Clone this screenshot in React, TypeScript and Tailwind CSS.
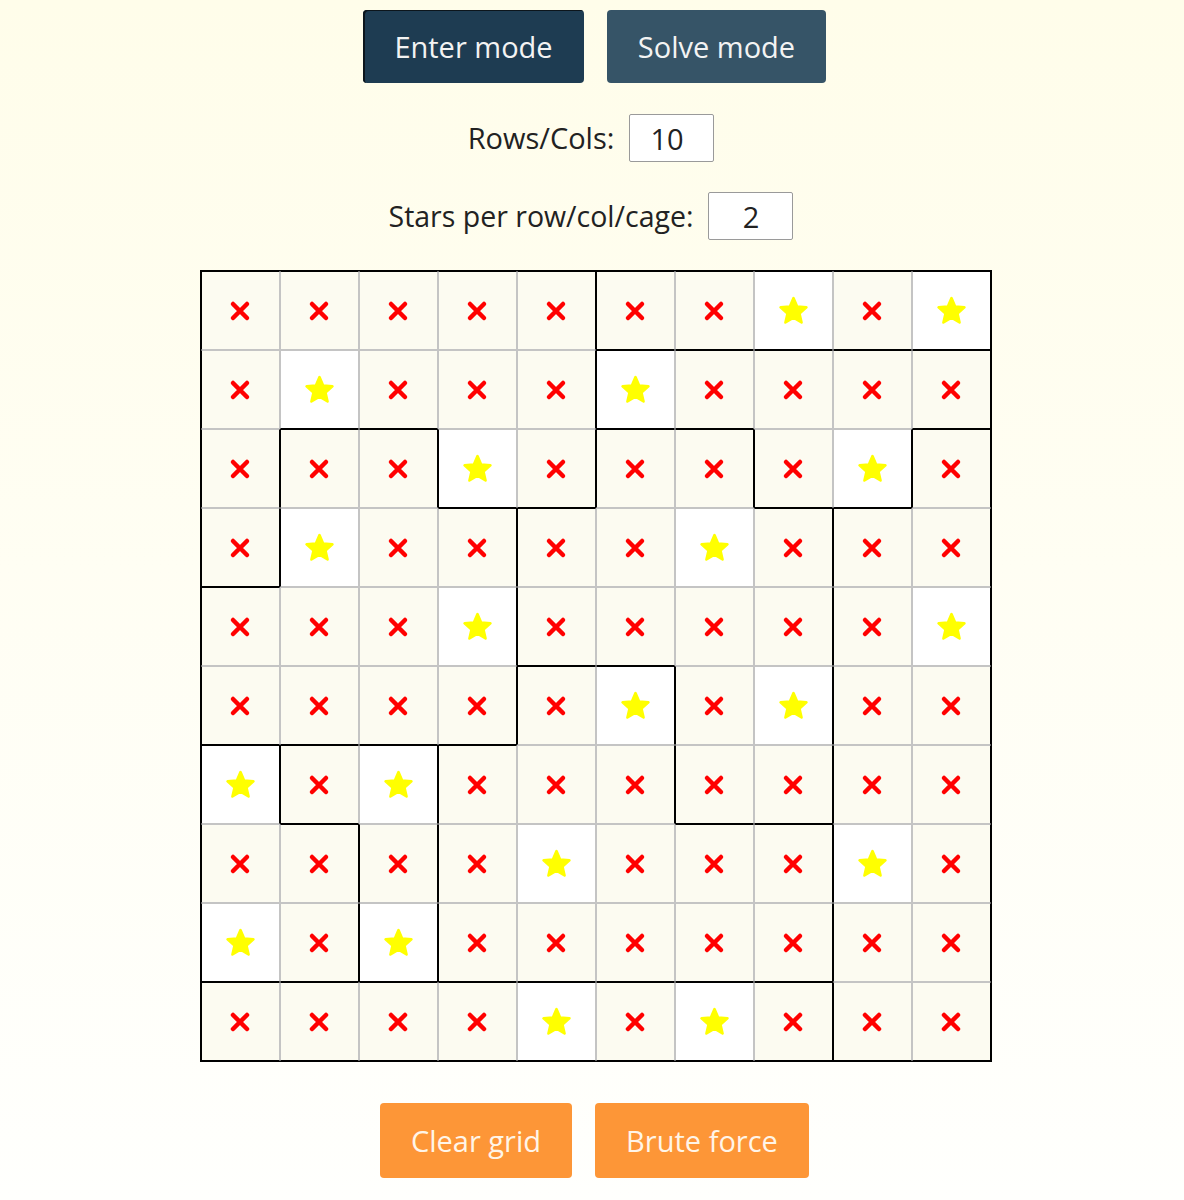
import React from 'react';

// cage id per cell, row by row
const CAGES = [
  'DDDDDAAAAA',
  'DDDDDBBBBB',
  'DEEDDCCBBI',
  'DEEECCCCII',
  'EEEECCCCII',
  'EEEEHHCCII',
  'FGGHHHCCII',
  'FFGHHHHHII',
  'FFGHHHHHII',
  'JJJJJJJJII',
];

// 1 = star, 0 = cross
const STARS = [
  '0000000101',
  '0100010000',
  '0001000010',
  '0100001000',
  '0001000001',
  '0000010100',
  '1010000000',
  '0000100010',
  '1010000000',
  '0000101000',
];

const Star = () => (
  <svg width="31" height="30" viewBox="0 0 30 29" aria-hidden="true">
    <polygon
      points="15,2 18.6,10.3 27.5,11 20.8,16.9 22.8,25.6 15,21 7.2,25.6 9.2,16.9 2.5,11 11.4,10.3"
      fill="#ffff00"
      stroke="#ffff00"
      strokeWidth="2.5"
      strokeLinejoin="round"
    />
  </svg>
);

const Cross = () => (
  <svg width="22" height="22" viewBox="0 0 22 22" aria-hidden="true">
    <path d="M4 4 L18 18 M18 4 L4 18" stroke="#ff0000" strokeWidth="4.5" strokeLinecap="round" />
  </svg>
);

const Cell: React.FC<{ r: number; c: number }> = ({ r, c }) => {
  const id = CAGES[r][c];
  const top = r === 0 || CAGES[r - 1][c] !== id;
  const bottom = r === 9 || CAGES[r + 1][c] !== id;
  const left = c === 0 || CAGES[r][c - 1] !== id;
  const right = c === 9 || CAGES[r][c + 1] !== id;
  const star = STARS[r][c] === '1';

  return (
    <div
      className={`flex h-[79px] w-[79px] items-center justify-center border ${
        top ? 'border-t-black' : 'border-t-[#c4c4c4]'
      } ${bottom ? 'border-b-black' : 'border-b-[#c4c4c4]'} ${
        left ? 'border-l-black' : 'border-l-[#c4c4c4]'
      } ${right ? 'border-r-black' : 'border-r-[#c4c4c4]'} ${star ? 'bg-white' : 'bg-[#fcfbf1]'}`}
    >
      {star ? <Star /> : <Cross />}
    </div>
  );
};

export default function App() {
  return (
    <div
      className="flex h-[1200px] flex-col items-center bg-linear-to-b from-[#fffdea] to-[#fffffd] pt-[10px] pl-[5px] text-[#222]"
      style={{ fontFamily: '"Open Sans", "DejaVu Sans", sans-serif' }}
    >
      <div className="flex gap-[23px]">
        <button
          type="button"
          className="h-[73px] w-[221px] rounded-[4px] bg-[#1e3c52] text-[29px] text-[#f3f3f3] shadow-[inset_2px_1px_0_0_#0c151c]"
        >
          Enter mode
        </button>
        <button type="button" className="h-[73px] w-[219px] rounded-[4px] bg-[#365467] text-[29px] text-[#f3f3f3]">
          Solve mode
        </button>
      </div>

      <div className="mt-[31px] -ml-[7px] flex items-center gap-[15px]">
        <label className="text-[29px]">Rows/Cols:</label>
        <input
          readOnly
          value="10"
          className="h-[48px] w-[85px] rounded-[2px] border border-[#9a9a9a] bg-white pl-[20px] text-[29px] outline-none"
          style={{ fontFamily: '"Open Sans", sans-serif' }}
        />
      </div>

      <div className="mt-[30px] -ml-[7px] flex items-center gap-[15px]">
        <label className="text-[28.5px]">Stars per row/col/cage:</label>
        <input
          readOnly
          value="2"
          className="h-[48px] w-[85px] rounded-[2px] border border-[#9a9a9a] bg-white text-center text-[29px] outline-none"
          style={{ fontFamily: '"Open Sans", sans-serif' }}
        />
      </div>

      <div className="mt-[30px] ml-[2px] grid grid-cols-[repeat(10,79px)] border border-black">
        {CAGES.map((row, r) => row.split('').map((_, c) => <Cell key={`${r}-${c}`} r={r} c={c} />))}
      </div>

      <div className="mt-[41px] flex gap-[23px]">
        <button type="button" className="h-[75px] w-[192px] rounded-[4px] bg-[#fd9637] text-[29px] text-[#fff5e8]">
          Clear grid
        </button>
        <button type="button" className="h-[75px] w-[214px] rounded-[4px] bg-[#fd9637] text-[29px] text-[#fff5e8]">
          Brute force
        </button>
      </div>
    </div>
  );
}
